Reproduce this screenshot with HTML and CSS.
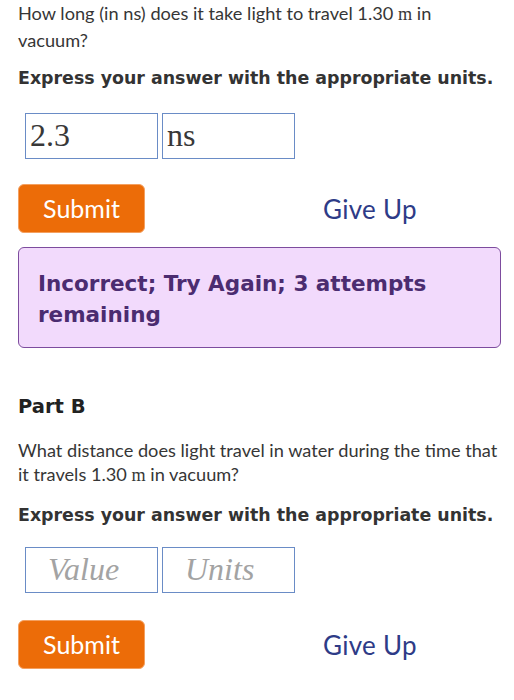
FILE: index.html
```html
<!DOCTYPE html>
<html>
<head>
<meta charset="utf-8">
<link rel="stylesheet" href="styles.css">
</head>
<body>
<div class="page">
  <p class="question">How long (in ns) does it take light to travel 1.30 <span class="math">m</span> in vacuum?</p>
  <p class="instr">Express your answer with the appropriate units.</p>
  <div class="answer">
    <div class="field value">2.3</div>
    <div class="field units">ns</div>
  </div>
  <div class="actions">
    <button class="submit">Submit</button>
    <a class="giveup">Give Up</a>
  </div>
  <div class="feedback">Incorrect; Try Again; 3 attempts remaining</div>

  <h2 class="part">Part B</h2>
  <p class="question q2">What distance does light travel in water during the time that it travels 1.30 <span class="math">m</span> in vacuum?</p>
  <p class="instr i2">Express your answer with the appropriate units.</p>
  <div class="answer a2">
    <div class="field value placeholder">Value</div>
    <div class="field units placeholder">Units</div>
  </div>
  <div class="actions act2">
    <button class="submit">Submit</button>
    <a class="giveup">Give Up</a>
  </div>
</div>
</body>
</html>
```

FILE: styles.css
```css
html, body {
  margin: 0;
  padding: 0;
  background: #ffffff;
}
.page {
  padding: 0 13px 0 18px;
  font-family: "Lato", "Open Sans", sans-serif;
  color: #363636;
}
.question {
  margin: 0;
  font-size: 18.2px;
  line-height: 26px;
}
.math {
  font-family: "Liberation Serif", serif;
}
.instr {
  margin: 13px 0 0 0;
  font-family: "DejaVu Sans", sans-serif;
  font-weight: bold;
  font-size: 17.4px;
  line-height: 24px;
  color: #333333;
}
.answer {
  display: flex;
  gap: 4px;
  margin: 23px 0 0 7px;
}
.a2 {
  margin-top: 20px;
}
.field {
  box-sizing: border-box;
  width: 133px;
  height: 46px;
  border: 1.5px solid #6a8cc6;
  font-family: "Liberation Serif", serif;
  font-size: 32px;
  line-height: 43px;
  padding-left: 4px;
  color: #383838;
}
.field.placeholder {
  font-style: italic;
  color: #a3a3a3;
  padding-left: 22px;
}
.actions {
  display: flex;
  align-items: center;
  margin-top: 25px;
  height: 49px;
}
.act2 {
  margin-top: 27px;
}
.submit {
  box-sizing: border-box;
  width: 127px;
  height: 49px;
  background: #ec6c08;
  border: 1px solid #f4a060;
  border-radius: 6px;
  color: #ffffff;
  font-family: "Lato", "Open Sans", sans-serif;
  font-size: 25px;
  padding: 0 0 2px 0;
}
.giveup {
  margin-left: 178px;
  font-size: 26px;
  letter-spacing: 0.3px;
  color: #2e3b87;
}
.feedback {
  box-sizing: border-box;
  margin-top: 14px;
  width: 483px;
  height: 101px;
  background: #f2dafc;
  border: 1.5px solid #7d4c9e;
  border-radius: 6px;
  padding: 20px 18px 0 19px;
  font-family: "DejaVu Sans", sans-serif;
  font-weight: bold;
  font-size: 21.5px;
  line-height: 31px;
  color: #4b2c70;
}
.part {
  margin: 47px 0 0 0;
  font-family: "DejaVu Sans", sans-serif;
  font-weight: bold;
  font-size: 19.5px;
  line-height: 24px;
  color: #222;
}
.q2 {
  margin-top: 19px;
  line-height: 24px;
}
.i2 {
  margin-top: 16px;
}
```
